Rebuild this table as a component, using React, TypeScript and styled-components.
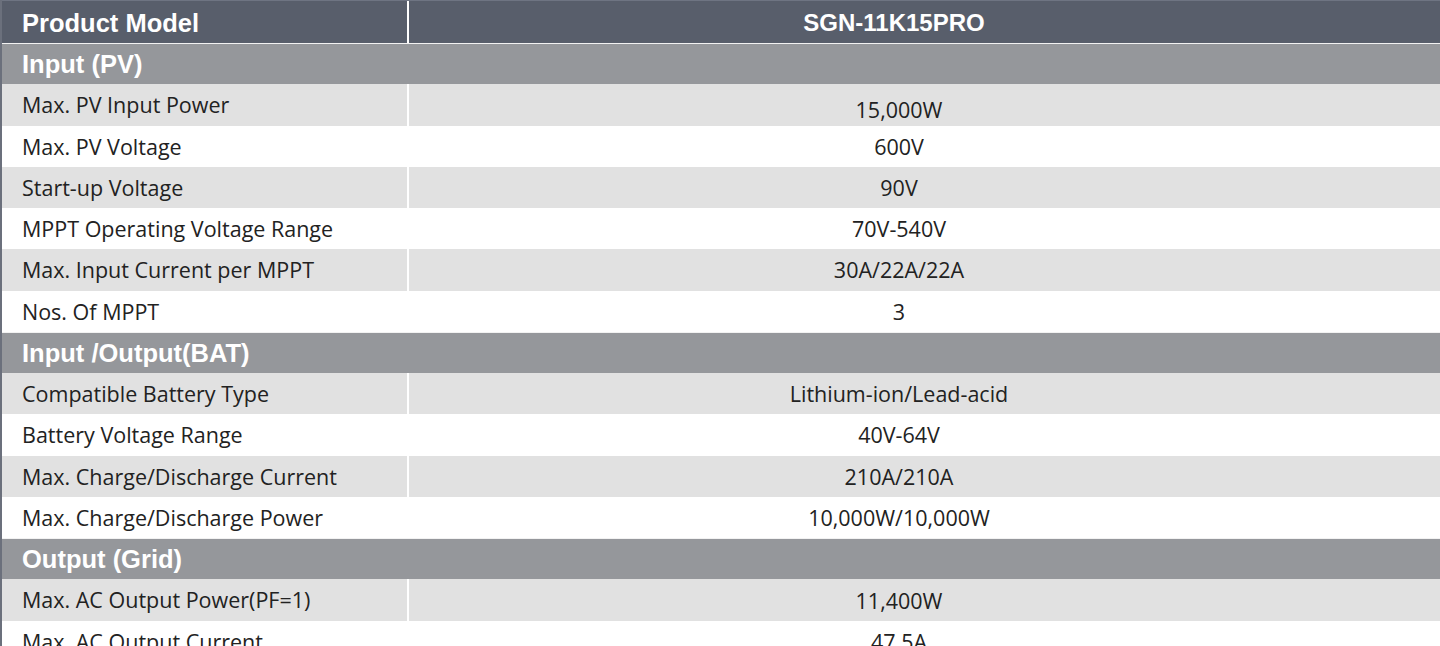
import React from "react";
import styled, { createGlobalStyle } from "styled-components";

const Global = createGlobalStyle`
  html, body { margin: 0; padding: 0; background: #ffffff; overflow: hidden; }
  #root { width: 1440px; height: 646px; overflow: hidden; }
`;

const Table = styled.div`
  width: 1440px;
  display: flex;
  flex-direction: column;
  border-left: 2px solid #6b707c;
  box-sizing: border-box;
`;

const HeaderRow = styled.div`
  display: grid;
  grid-template-columns: 405px 2px 1fr;
  height: 43px;
  background: #585e6b;
  border-top: 1px solid #6e7482;
  box-sizing: border-box;
  font-family: "Liberation Sans", Arial, sans-serif;
  font-weight: 700;
  color: #ffffff;
`;

const HeaderLabel = styled.div`
  display: flex;
  align-items: center;
  padding-left: 20px;
  padding-top: 2px;
  font-size: 25.5px;
`;

const HeaderValue = styled.div`
  display: flex;
  align-items: center;
  justify-content: center;
  padding-right: 61px;
  padding-top: 2px;
  font-size: 24px;
`;

const Divider = styled.div<{ $show: boolean }>`
  background: ${(p) => (p.$show ? "#ffffff" : "transparent")};
`;

const SectionRow = styled.div`
  height: 41.25px;
  display: flex;
  align-items: center;
  padding-left: 20px;
  padding-top: 1px;
  background: #95979b;
  border-top: 1px solid #f2f2f2;
  box-sizing: border-box;
  font-family: "Liberation Sans", Arial, sans-serif;
  font-weight: 700;
  font-size: 25.5px;
  color: #ffffff;
`;

const DataRow = styled.div<{ $shade: boolean }>`
  display: grid;
  grid-template-columns: 405px 2px 1fr;
  height: 41.25px;
  background: ${(p) => (p.$shade ? "#e1e1e1" : "#ffffff")};
  font-family: "Open Sans", "Noto Sans", sans-serif;
  font-size: 21.5px;
  color: #222222;
`;

const Label = styled.div`
  display: flex;
  align-items: center;
  padding-left: 20px;
  white-space: nowrap;
`;

const Value = styled.div<{ $drop: number }>`
  display: flex;
  align-items: center;
  justify-content: center;
  padding-right: 51px;
  padding-top: ${(p) => p.$drop}px;
  white-space: nowrap;
`;

type Item =
  | { kind: "section"; title: string }
  | { kind: "row"; label: string; value: string; drop?: number };

const items: Item[] = [
  { kind: "section", title: "Input (PV)" },
  { kind: "row", label: "Max. PV Input Power", value: "15,000W", drop: 9 },
  { kind: "row", label: "Max. PV Voltage", value: "600V" },
  { kind: "row", label: "Start-up Voltage", value: "90V" },
  { kind: "row", label: "MPPT Operating Voltage Range", value: "70V-540V" },
  { kind: "row", label: "Max. Input Current per MPPT", value: "30A/22A/22A" },
  { kind: "row", label: "Nos. Of MPPT", value: "3" },
  { kind: "section", title: "Input /Output(BAT)" },
  { kind: "row", label: "Compatible Battery Type", value: "Lithium-ion/Lead-acid" },
  { kind: "row", label: "Battery Voltage Range", value: "40V-64V" },
  { kind: "row", label: "Max. Charge/Discharge Current", value: "210A/210A" },
  { kind: "row", label: "Max. Charge/Discharge Power", value: "10,000W/10,000W" },
  { kind: "section", title: "Output (Grid)" },
  { kind: "row", label: "Max. AC Output Power(PF=1)", value: "11,400W", drop: 2 },
  { kind: "row", label: "Max. AC Output Current", value: "47.5A" },
];

export default function App() {
  let shade = true;
  return (
    <>
      <Global />
      <Table>
        <HeaderRow>
          <HeaderLabel>Product Model</HeaderLabel>
          <Divider $show />
          <HeaderValue>SGN-11K15PRO</HeaderValue>
        </HeaderRow>
        {items.map((it, i) => {
          if (it.kind === "section") {
            shade = true;
            return <SectionRow key={i}>{it.title}</SectionRow>;
          }
          const s = shade;
          shade = !shade;
          return (
            <DataRow key={i} $shade={s}>
              <Label>{it.label}</Label>
              <Divider $show={s} />
              <Value $drop={it.drop ?? 0}>{it.value}</Value>
            </DataRow>
          );
        })}
      </Table>
    </>
  );
}
